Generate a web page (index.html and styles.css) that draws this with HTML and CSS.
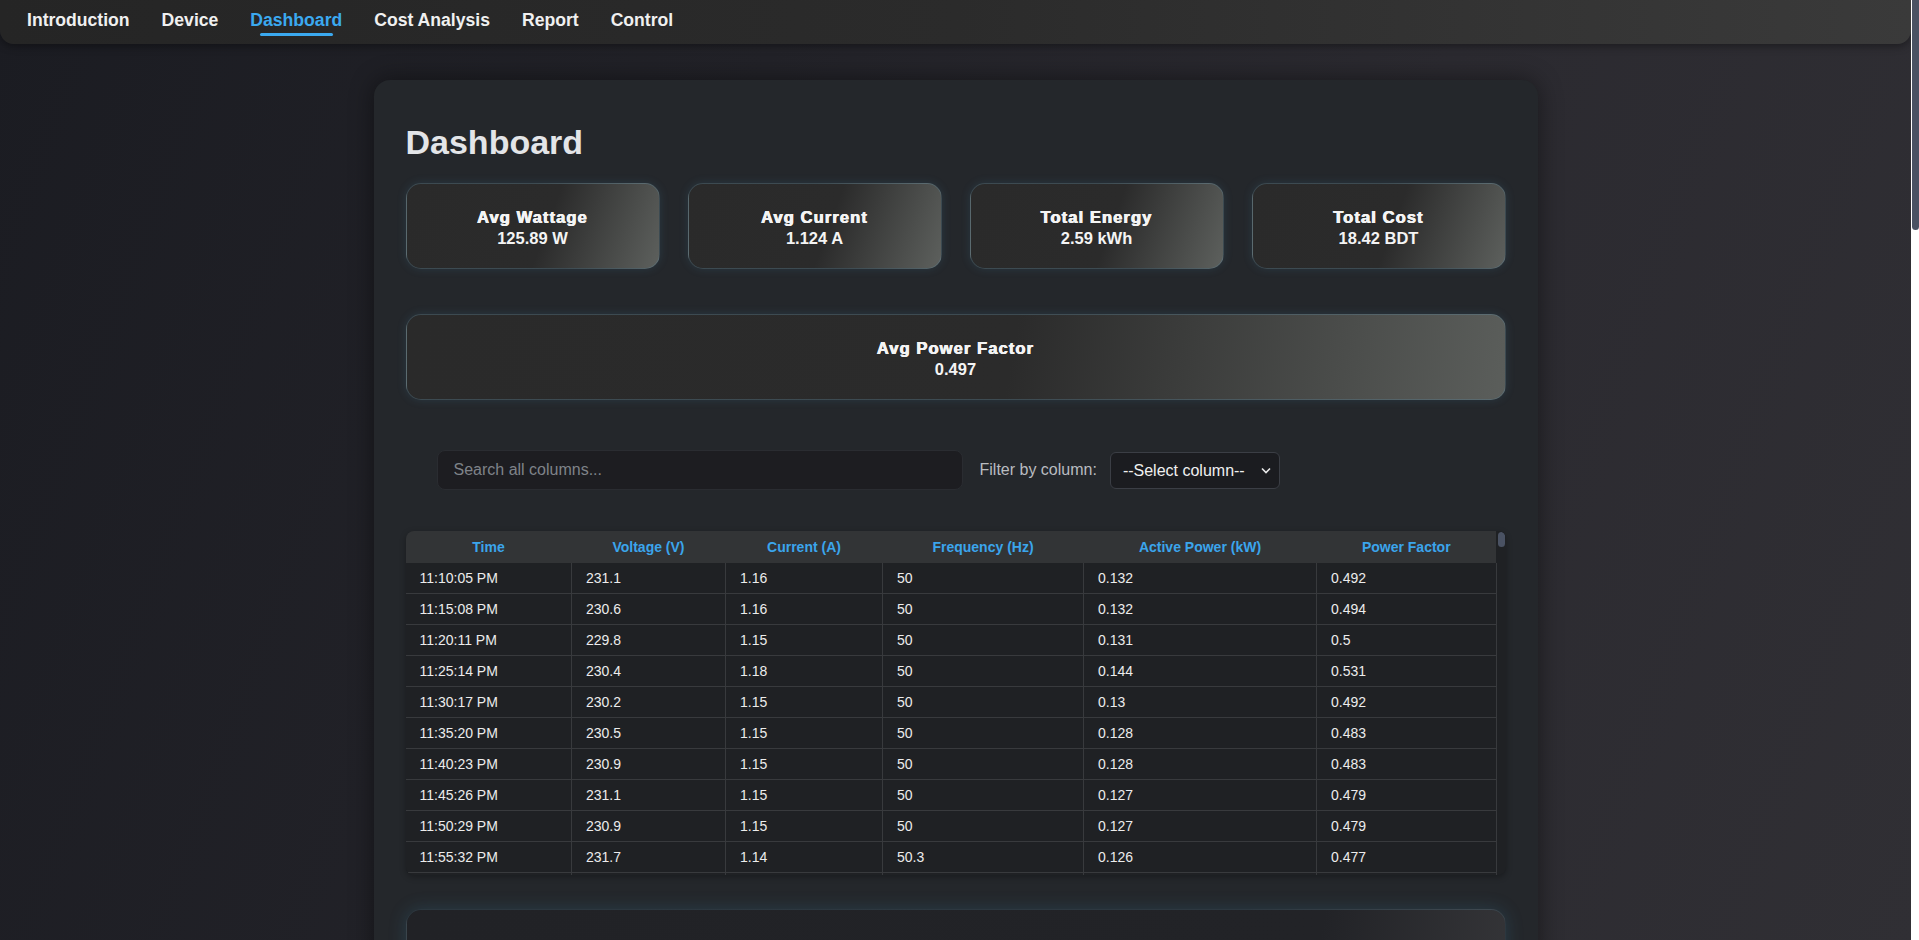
FILE: index.html
```html
<!DOCTYPE html>
<html lang="en">
<head>
<meta charset="utf-8">
<title>Dashboard</title>
<link rel="stylesheet" href="styles.css">
</head>
<body>
<nav class="topnav">
  <a class="nav-link" href="#">Introduction</a>
  <a class="nav-link" href="#">Device</a>
  <a class="nav-link active" href="#">Dashboard</a>
  <a class="nav-link" href="#">Cost Analysis</a>
  <a class="nav-link" href="#">Report</a>
  <a class="nav-link" href="#">Control</a>
</nav>

<main class="dashboard">
  <h1 class="page-title">Dashboard</h1>

  <section class="stats">
    <div class="stat-card"><div class="stat-label">Avg Wattage</div><div class="stat-value">125.89 W</div></div>
    <div class="stat-card"><div class="stat-label">Avg Current</div><div class="stat-value">1.124 A</div></div>
    <div class="stat-card"><div class="stat-label">Total Energy</div><div class="stat-value">2.59 kWh</div></div>
    <div class="stat-card"><div class="stat-label">Total Cost</div><div class="stat-value">18.42 BDT</div></div>
  </section>

  <div class="stat-card stat-wide"><div class="stat-label">Avg Power Factor</div><div class="stat-value">0.497</div></div>

  <div class="controls">
    <input class="search-input" type="text" placeholder="Search all columns...">
    <label class="filter-label">Filter by column:</label>
    <div class="select-box">
      <select class="column-select">
        <option>--Select column--</option>
        <option>Time</option>
        <option>Voltage (V)</option>
        <option>Current (A)</option>
        <option>Frequency (Hz)</option>
        <option>Active Power (kW)</option>
        <option>Power Factor</option>
      </select>
      <svg class="chevron" width="10" height="7" viewBox="0 0 10 7"><path d="M1 1.5 L5 5.5 L9 1.5" fill="none" stroke="#e8e8e8" stroke-width="1.6"/></svg>
    </div>
  </div>

  <div class="table-shell">
    <div class="table-wrap">
      <table class="data-table">
        <colgroup>
          <col class="col-time"><col class="col-volt"><col class="col-curr"><col class="col-freq"><col class="col-power"><col class="col-pf">
        </colgroup>
        <thead>
          <tr><th>Time</th><th>Voltage (V)</th><th>Current (A)</th><th>Frequency (Hz)</th><th>Active Power (kW)</th><th>Power Factor</th></tr>
        </thead>
        <tbody id="rows">
          <tr><td>11:10:05 PM</td><td>231.1</td><td>1.16</td><td>50</td><td>0.132</td><td>0.492</td></tr>
          <tr><td>11:15:08 PM</td><td>230.6</td><td>1.16</td><td>50</td><td>0.132</td><td>0.494</td></tr>
          <tr><td>11:20:11 PM</td><td>229.8</td><td>1.15</td><td>50</td><td>0.131</td><td>0.5</td></tr>
          <tr><td>11:25:14 PM</td><td>230.4</td><td>1.18</td><td>50</td><td>0.144</td><td>0.531</td></tr>
          <tr><td>11:30:17 PM</td><td>230.2</td><td>1.15</td><td>50</td><td>0.13</td><td>0.492</td></tr>
          <tr><td>11:35:20 PM</td><td>230.5</td><td>1.15</td><td>50</td><td>0.128</td><td>0.483</td></tr>
          <tr><td>11:40:23 PM</td><td>230.9</td><td>1.15</td><td>50</td><td>0.128</td><td>0.483</td></tr>
          <tr><td>11:45:26 PM</td><td>231.1</td><td>1.15</td><td>50</td><td>0.127</td><td>0.479</td></tr>
          <tr><td>11:50:29 PM</td><td>230.9</td><td>1.15</td><td>50</td><td>0.127</td><td>0.479</td></tr>
          <tr><td>11:55:32 PM</td><td>231.7</td><td>1.14</td><td>50.3</td><td>0.126</td><td>0.477</td></tr>
        </tbody>
      </table>
    </div>
    <div class="table-thumb"></div>
  </div>

  <section class="chart-card"></section>
  <section class="chart-card"></section>
  <section class="chart-card"></section>
  <section class="chart-card"></section>
  <section class="chart-card"></section>
  <section class="chart-card"></section>
</main>

<div class="page-scrollbar"><div class="page-thumb"></div></div>
<script src="script.js"></script>
</body>
</html>
```

FILE: styles.css
```css
html, body { margin: 0; padding: 0; }

body {
  padding-right: 8px;
  font-family: "Liberation Sans", Arial, sans-serif;
  background: linear-gradient(110deg, #1b1c22 0%, #222228 35%, #2b2a30 65%, #302f34 100%) fixed;
  color: #f0f0f0;
}

/* decorative page scrollbar (overlay at the right edge) */
.page-scrollbar {
  position: fixed;
  top: 0;
  right: 0;
  width: 8px;
  height: 100vh;
  background: #ffffff;
}

.page-thumb {
  height: 230px;
  margin-left: 1px;
  background: #4a5263;
  border-radius: 0 0 4px 4px;
}

.topnav {
  display: flex;
  align-items: flex-start;
  gap: 32px;
  height: 44px;
  box-sizing: border-box;
  padding: 10px 27px 0;
  background: linear-gradient(to right, #252525 0%, #2b2b2b 50%, #3a3a3a 100%);
  border-radius: 0 0 14px 14px;
  box-shadow: 0 2px 8px rgba(0, 0, 0, 0.4);
}

.nav-link {
  position: relative;
  color: #f0f0f0;
  font-size: 17.6px;
  font-weight: bold;
  line-height: 20px;
  text-decoration: none;
}

.nav-link.active { color: #3ba9f0; }

.nav-link.active::after {
  content: "";
  position: absolute;
  left: 10%;
  right: 10%;
  bottom: -6px;
  height: 3px;
  border-radius: 2px;
  background: #3ba9f0;
}

.dashboard {
  width: 1100px;
  margin: 36px auto 40px;
  padding: 43px 32px 32px;
  background: #24272b;
  border-radius: 16px;
  box-shadow: 0 0 25px rgba(0, 0, 0, 0.45);
}

.page-title {
  margin: 0 0 22px;
  font-size: 34px;
  line-height: 38px;
  color: #e3e5e8;
}

.stats {
  display: grid;
  grid-template-columns: repeat(4, 1fr);
  gap: 28px;
}

.stat-card {
  height: 86px;
  box-sizing: border-box;
  padding-top: 23px;
  text-align: center;
  color: #f4f4f4;
  border: 1px solid rgba(95, 135, 155, 0.35);
  border-radius: 15px;
  background: linear-gradient(110deg, #2a2a2a 0%, #2b2b2b 55%, #5d605d 100%);
  box-shadow: 0 0 10px rgba(70, 140, 180, 0.18);
}

.stat-label {
  font-size: 16.5px;
  font-weight: bold;
  letter-spacing: 1.1px;
  line-height: 21px;
  text-shadow: 0.4px 0 0 currentColor, -0.4px 0 0 currentColor;
}

.stat-value {
  font-size: 16.5px;
  font-weight: bold;
  line-height: 21px;
}

.stat-wide {
  margin-top: 45px;
  background: linear-gradient(100deg, #2a2a2a 0%, #2b2b2b 55%, #5b5e5b 100%);
}

.controls {
  display: flex;
  align-items: center;
  margin: 50px 0 41px;
  padding: 0 31px;
}

.search-input {
  width: 526px;
  height: 40px;
  box-sizing: border-box;
  padding: 0 16px;
  background: #1d1d21;
  border: 1px solid #2a2c31;
  border-radius: 8px;
  color: #dddddd;
  font-family: "Liberation Sans", Arial, sans-serif;
  font-size: 16px;
  outline: none;
}

.search-input::placeholder { color: #7f8389; }

.filter-label {
  margin: 0 13px 0 17px;
  font-size: 16px;
  color: #b9bcc0;
}

.select-box { position: relative; }

.column-select {
  appearance: none;
  -webkit-appearance: none;
  width: 170px;
  height: 37px;
  padding: 0 26px 0 12px;
  background: #1b1c20;
  border: 1px solid #3b3e45;
  border-radius: 6px;
  color: #f0f0f0;
  font-family: "Liberation Sans", Arial, sans-serif;
  font-size: 16px;
}

.chevron {
  position: absolute;
  right: 9px;
  top: 15px;
  pointer-events: none;
}

.table-shell {
  position: relative;
  height: 344px;
  padding-right: 9px;
  overflow: hidden;
  border-radius: 8px;
  background: #1f2124;
  box-shadow: 0 2px 6px rgba(0, 0, 0, 0.3);
}

.table-wrap {
  height: 100%;
  overflow-y: auto;
  scrollbar-width: none;
}

.table-thumb {
  position: absolute;
  top: 1px;
  right: 1px;
  width: 7px;
  height: 15px;
  border-radius: 4px;
  background: #4a5263;
}

.data-table {
  width: 100%;
  border-collapse: collapse;
  table-layout: fixed;
  font-size: 14px;
}

.col-time { width: 166px; }
.col-volt { width: 154px; }
.col-curr { width: 157px; }
.col-freq { width: 201px; }
.col-power { width: 233px; }

.data-table th {
  position: sticky;
  top: 0;
  padding: 8px 14px;
  line-height: 16px;
  background: #323436;
  color: #3ba5ec;
  font-weight: bold;
  text-align: center;
}

.data-table td {
  padding: 7px 14px;
  line-height: 16px;
  border: 1px solid #383a3d;
  color: #ececec;
  background: #1f2124;
  white-space: nowrap;
}

.data-table tbody tr:first-child td { border-top: none; }
.data-table td:first-child { border-left: none; }

.chart-card {
  height: 450px;
  margin-top: 34px;
  box-sizing: border-box;
  border: 1px solid rgba(80, 120, 140, 0.25);
  border-radius: 15px;
  background: linear-gradient(100deg, #212226 0%, #222327 78%, #3a3a3d 100%);
  box-shadow: 0 0 18px rgba(60, 140, 180, 0.22);
}
```

FILE: script.js
```js
(function () {
  var body = document.getElementById('rows');
  var seed = 12345;
  function rnd() {
    seed = (seed * 1103515245 + 12345) % 2147483648;
    return seed / 2147483648;
  }
  var t = 23 * 3600 + 55 * 60 + 32;
  function fmt(sec) {
    sec = sec % 86400;
    var h = Math.floor(sec / 3600), m = Math.floor((sec % 3600) / 60), s = sec % 60;
    var ap = h >= 12 ? 'PM' : 'AM';
    var h12 = h % 12; if (h12 === 0) h12 = 12;
    return h12 + ':' + (m < 10 ? '0' : '') + m + ':' + (s < 10 ? '0' : '') + s + ' ' + ap;
  }
  var html = '';
  for (var i = 0; i < 250; i++) {
    t += 303;
    var v = (229 + rnd() * 3).toFixed(1);
    var c = (1.1 + rnd() * 0.09).toFixed(2);
    var f = rnd() > 0.85 ? '50.3' : '50';
    var p = +(0.12 + rnd() * 0.025).toFixed(3);
    var pf = +(0.47 + rnd() * 0.06).toFixed(3);
    html += '<tr><td>' + fmt(t) + '</td><td>' + v + '</td><td>' + (+c) + '</td><td>' + f + '</td><td>' + p + '</td><td>' + pf + '</td></tr>';
  }
  body.insertAdjacentHTML('beforeend', html);
})();
```
